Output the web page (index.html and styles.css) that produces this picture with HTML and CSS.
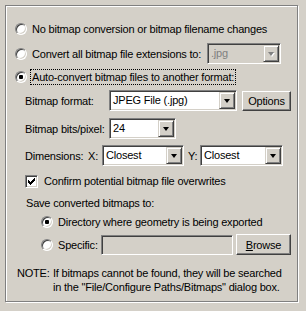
FILE: index.html
```html
<!DOCTYPE html>
<html>
<head>
<meta charset="utf-8">
<link rel="stylesheet" href="styles.css">
</head>
<body>
<div class="group">
  <div class="row r1"><span class="radio"></span><span class="lbl">No bitmap conversion or bitmap filename changes</span></div>
  <div class="row r2"><span class="radio"></span><span class="lbl">Convert all bitmap file extensions to:</span>
    <div class="combo disabled c-ext"><span class="val">.jpg</span><span class="drop"><i class="arrow"></i></span></div>
  </div>
  <div class="row r3"><span class="radio checked"></span><span class="lbl focus">Auto-convert bitmap files to another format:</span></div>

  <div class="sub">
    <div class="row rfmt"><span class="flabel">Bitmap format:</span>
      <div class="combo c-fmt"><span class="val">JPEG File (.jpg)</span><span class="drop"><i class="arrow"></i></span></div>
      <button class="btn b-opt">Options</button>
    </div>
    <div class="row rbits"><span class="flabel">Bitmap bits/pixel:</span>
      <div class="combo c-bits"><span class="val">24</span><span class="drop"><i class="arrow"></i></span></div>
    </div>
    <div class="row rdim"><span class="dlabel">Dimensions:</span><span class="xl">X:</span>
      <div class="combo c-x"><span class="val">Closest</span><span class="drop"><i class="arrow"></i></span></div>
      <span class="yl">Y:</span>
      <div class="combo c-y"><span class="val">Closest</span><span class="drop"><i class="arrow"></i></span></div>
    </div>
    <div class="row rchk"><span class="check"><svg width="7" height="7" viewBox="0 0 7 7"><path d="M0 2h1v3H0z M1 3h1v3H1z M2 4h1v3H2z M3 3h1v3H3z M4 2h1v3H4z M5 1h1v3H5z M6 0h1v3H6z" fill="#000"/></svg></span><span class="lbl clbl">Confirm potential bitmap file overwrites</span></div>
    <div class="row rsave"><span class="slbl">Save converted bitmaps to:</span></div>
    <div class="row rdir"><span class="radio checked"></span><span class="lbl">Directory where geometry is being exported</span></div>
    <div class="row rspec"><span class="radio"></span><span class="lbl splbl">Specific:</span>
      <div class="edit"></div>
      <button class="btn b-browse"><u>B</u>rowse</button>
    </div>
  </div>

  <div class="note"><span class="nhead">NOTE:</span><span class="ntext">If bitmaps cannot be found, they will be searched<br>in the "File/Configure Paths/Bitmaps" dialog box.</span></div>
</div>
</body>
</html>
```
FILE: styles.css
```css
html, body {
  margin: 0;
  padding: 0;
  background: #d4d0c8;
}
body {
  font-family: "Liberation Sans", Arial, sans-serif;
  font-size: 11px;
  letter-spacing: -0.2px;
  color: #000;
  width: 306px;
  height: 311px;
  overflow: hidden;
  padding-top: 5px;
  box-sizing: border-box;
}
.group {
  margin-left: 5px;
  width: 293px;
  height: 297px;
  box-sizing: border-box;
  border: 1px solid #808080;
  box-shadow: inset 1px 1px 0 #fff, 1px 1px 0 #fff;
  padding: 15px 0 0 9px;
}
.row {
  display: flex;
  align-items: center;
  height: 16px;
  line-height: 16px;
  white-space: nowrap;
}
.radio {
  position: relative;
  flex: none;
  width: 12px;
  height: 12px;
  box-sizing: border-box;
  border-radius: 50%;
  border: 1px solid;
  border-color: #808080 #fff #fff #808080;
  box-shadow: inset 1px 1px 0 #404040, inset -1px -1px 0 #d4d0c8;
  background: #fff;
}
.radio.checked::after {
  content: "";
  position: absolute;
  left: 3px;
  top: 3px;
  width: 4px;
  height: 4px;
  border-radius: 1px;
  background: #000;
}
.lbl {
  margin-left: 5px;
}
.r2 { height: 21px; margin-top: 6px; }
.r3 { margin-top: 5px; }
.focus {
  outline: 1px dotted #000;
  line-height: 14px;
  padding: 0 1px;
  margin-left: 4px;
}

.combo {
  position: relative;
  flex: none;
  height: 21px;
  box-sizing: border-box;
  border: 1px solid;
  border-color: #808080 #fff #fff #808080;
  box-shadow: inset 1px 1px 0 #404040, inset -1px -1px 0 #d4d0c8;
  background: #fff;
  display: flex;
  align-items: center;
  padding: 1px;
}
.combo .val {
  flex: 1;
  padding-left: 2px;
  line-height: 17px;
}
.combo .drop {
  flex: none;
  width: 16px;
  height: 17px;
  box-sizing: border-box;
  border: 1px solid;
  border-color: #d4d0c8 #404040 #404040 #d4d0c8;
  box-shadow: inset 1px 1px 0 #fff, inset -1px -1px 0 #808080;
  background: #d4d0c8;
  display: flex;
  align-items: center;
  justify-content: center;
}
.arrow {
  display: block;
  width: 0;
  height: 0;
  border-left: 3.5px solid transparent;
  border-right: 3.5px solid transparent;
  border-top: 4px solid #000;
  margin-top: 1px;
}
.combo.disabled { background: #d4d0c8; }
.combo.disabled .val { color: #808080; }
.combo.disabled .arrow {
  border-top-color: #808080;
  filter: drop-shadow(1px 1px 0 #fff);
}
.c-ext { width: 74px; margin-left: auto; margin-right: 16px; }

.sub { padding-left: 10px; }
.flabel { width: 84px; flex: none; }
.rfmt { height: 21px; margin-top: 5px; }
.c-fmt { width: 128px; }
.btn {
  font: inherit;
  letter-spacing: inherit;
  color: #000;
  background: #d4d0c8;
  box-sizing: border-box;
  border: 1px solid;
  border-color: #fff #404040 #404040 #fff;
  box-shadow: inset -1px -1px 0 #808080;
  padding: 0;
  margin: 0;
  height: 21px;
  line-height: 18px;
  text-align: center;
  flex: none;
}
.b-opt { width: 49px; margin-left: 5px; height: 20px; }
.rbits { height: 21px; margin-top: 7px; }
.c-bits { width: 67px; }
.rdim { height: 21px; margin-top: 6px; }
.dlabel { width: 63px; flex: none; }
.xl { width: 14px; flex: none; }
.c-x { width: 82px; }
.yl { width: 12px; margin-left: 4px; flex: none; }
.c-y { width: 83px; }

.rchk { margin-top: 7px; }
.check {
  flex: none;
  width: 13px;
  height: 13px;
  box-sizing: border-box;
  border: 1px solid;
  border-color: #808080 #fff #fff #808080;
  box-shadow: inset 1px 1px 0 #404040, inset -1px -1px 0 #d4d0c8;
  background: #fff;
  display: flex;
  align-items: center;
  justify-content: center;
}
.check svg { display: block; shape-rendering: crispEdges; }
.clbl { margin-left: 6px; }
.rsave { margin-top: 6px; padding-left: 1px; }
.rdir { margin-top: 3px; padding-left: 16px; }
.rspec { margin-top: 4px; padding-left: 16px; height: 21px; }
.splbl { width: 43px; flex: none; }
.edit {
  flex: none;
  width: 132px;
  height: 20px;
  box-sizing: border-box;
  border: 1px solid;
  border-color: #808080 #fff #fff #808080;
  box-shadow: inset 1px 1px 0 #404040, inset -1px -1px 0 #d4d0c8;
  background: #d4d0c8;
}
.b-browse { width: 55px; margin-left: 3px; height: 21px; }

.note {
  display: flex;
  margin-top: 11px;
  padding-left: 2px;
  line-height: 14px;
  white-space: nowrap;
}
.nhead { width: 36px; flex: none; }
```
